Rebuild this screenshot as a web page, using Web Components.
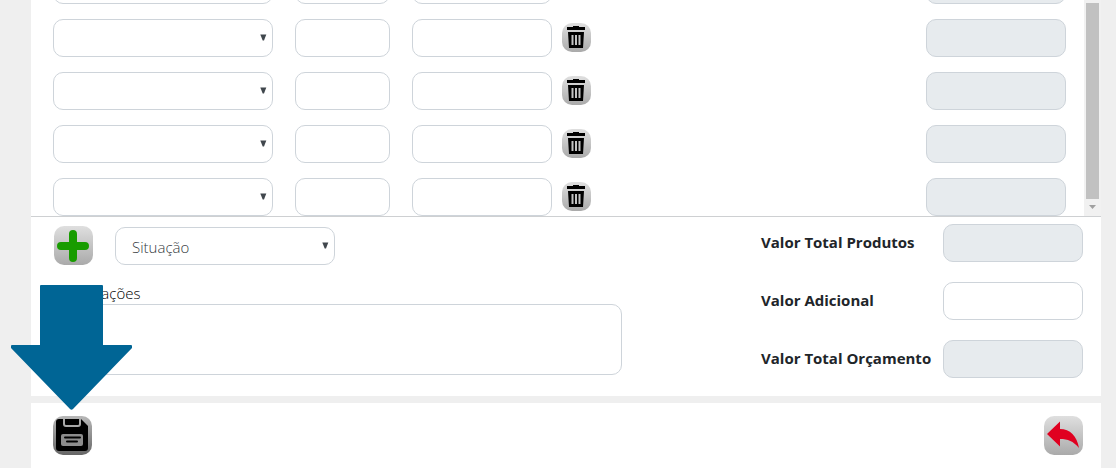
<!DOCTYPE html>
<html lang="pt-BR">
<head>
<meta charset="utf-8">
<title>Orçamento</title>
<style>
  body { margin: 0; background: #efefef; color: #212529; font: 300 15px/20px "Open Sans", "Noto Sans", sans-serif; }
</style>
</head>
<body>
<budget-page></budget-page>
<script>
const define = (name, html, setup) => customElements.define(name, class extends HTMLElement {
  connectedCallback() {
    if (this.shadowRoot) return;
    const t = document.createElement('template');
    t.innerHTML = html;
    this.attachShadow({ mode: 'open' }).append(t.content.cloneNode(true));
    if (setup) setup(this, this.shadowRoot);
  }
});

const control = `
  * { box-sizing: border-box; }
  input, select, textarea {
    display: block; width: 100%; height: 38px; margin: 0; padding: 0 16px;
    border: 1px solid #ced4da; border-radius: 10px; background: #fff;
    color: #343a40; font: inherit; outline: 0; appearance: none;
  }
  input:disabled { background: #e7ebee; }`;

define('text-field', `
  <style>${control}
    :host { display: block; flex: none; width: 140px; }
    label { display: flex; align-items: center; }
    label span:not(:empty) { width: 182px; flex: none; padding-bottom: 2px; font-weight: 700; }
    :host([label]) { width: auto; }
    :host([label]) input { width: 140px; }
    :host([small]) { width: 95px; }
  </style>
  <label><span></span><input type="text"></label>`, (host, root) => {
  const input = root.querySelector('input');
  root.querySelector('span').textContent = host.getAttribute('label') || '';
  if (!host.hasAttribute('label')) input.setAttribute('aria-label', host.getAttribute('name'));
  input.disabled = host.hasAttribute('disabled');
});

define('select-field', `
  <style>${control}
    :host { display: grid; flex: none; width: 220px; align-items: center; }
    select, svg { grid-area: 1 / 1; }
    select { padding-top: 2px; }
    svg { justify-self: end; width: 7px; height: 7px; margin: 0 6px 1px 0; pointer-events: none; fill: #40474d; }
  </style>
  <select><option></option></select>
  <svg viewBox="0 0 7 7"><path d="M.3 .5h6L4 6.500H2.700z"/></svg>`, (host, root) => {
  root.querySelector('option').textContent = host.getAttribute('value') || '';
  root.querySelector('select').setAttribute('aria-label', host.getAttribute('name'));
});

define('text-area-field', `
  <style>${control}
    :host { display: block; color: #000; }
    label { display: block; padding-bottom: 1px; }
    textarea { height: 71px; padding: 8px 16px; resize: none; }
  </style>
  <label for="t"><slot></slot></label><textarea id="t"></textarea>`);

const icons = {
  trash: `<svg viewBox="0 0 29 29"><path d="M5 4h6V3h6v1h6v3H5zM6 9h16l-1 16H7z"/><path fill="none" stroke="#c4c4c4" stroke-width="2" d="M10.500 12v10M14 12v10M17.500 12v10"/></svg>`,
  plus: `<svg viewBox="0 0 39 39"><path fill="none" stroke="#189c00" stroke-width="8" stroke-linecap="round" d="M7 20h24M19 8v24"/></svg>`,
  save: `<svg viewBox="0 0 39 39"><path d="M6 3h22l7 7v22q0 3-3 3H6q-3 0-3-3V6q0-3 3-3z"/><path fill="none" stroke="#a8a8a8" stroke-width="2" d="M11 3v5q0 2 2 2h12q2 0 2-2V3"/><rect x="8" y="18" width="22" height="12" rx="2" fill="#8c8c8c"/><path stroke="#000" stroke-width="2" stroke-linecap="round" d="M12 21.500h15M14 25.500h10"/></svg>`,
  back: `<svg viewBox="0 0 39 39"><path fill="#e00020" d="M3 18 16 5.500v7.500C26 13 33 20 35 32 29 25 24 23 16 23v7.500z"/></svg>`
};

define('icon-button', `
  <style>
    :host { display: block; flex: none; width: 39px; height: 39px; }
    :host([icon=trash]) { width: 29px; height: 29px; margin-bottom: 2px; }
    button { display: block; width: 100%; height: 100%; padding: 0; border: 0; border-radius: 10px; background: linear-gradient(#dfdfdf, #aaa); }
    :host([icon=save]) button { background: linear-gradient(#b8b8b8, #666); }
    svg { display: block; width: 100%; height: 100%; }
  </style>
  <button type="button"></button>`, (host, root) => {
  const b = root.querySelector('button');
  b.innerHTML = icons[host.getAttribute('icon')];
  b.setAttribute('aria-label', host.getAttribute('name'));
});

define('item-row', `
  <style>
    :host { display: flex; flex: none; align-items: center; gap: 22px; }
    .value { display: flex; align-items: center; gap: 10px; }
    .total { margin-left: auto; }
  </style>
  <select-field name="Produto"></select-field>
  <text-field small name="Quantidade"></text-field>
  <div class="value"><text-field name="Valor"></text-field><icon-button icon="trash" name="Excluir"></icon-button></div>
  <text-field class="total" disabled name="Total"></text-field>`);

define('scroll-bar', `
  <style>
    :host { display: flex; flex-direction: column; align-items: center; gap: 6px; box-sizing: border-box; width: 17px; padding: 3px 0 7px; background: #f1f1f1; }
    div { flex: 1; width: 13px; background: #c1c1c1; }
    svg { width: 7px; height: 4px; fill: #a0a0a0; }
  </style>
  <div></div><svg viewBox="0 0 7 4"><path d="M0 0h7L3.500 4z"/></svg>`);

define('item-list', `
  <style>
    :host { display: flex; height: 216px; border-bottom: 1px solid #ced0d2; }
    .rows { flex: 1; display: flex; flex-direction: column; justify-content: flex-end; gap: 15px; padding: 0 18px 0 22px; overflow: hidden; }
  </style>
  <div class="rows"><slot></slot></div><scroll-bar></scroll-bar>`);

define('callout-arrow', `
  <style>
    :host { position: absolute; left: 11px; top: 285px; pointer-events: none; }
    svg { display: block; fill: #006595; }
  </style>
  <svg width="121" height="125" viewBox="0 0 121 125"><path d="M30 0h61q1 0 1 1v59h28q1 0 1 1v2L62 124q-1.500 1.500-3 0L0 63v-2q0-1 1-1h28V1q0-1 1-1z"/></svg>`);

define('budget-page', `
  <style>
    :host { display: flex; flex-direction: column; gap: 7px; min-height: 100vh; box-sizing: border-box; padding: 0 15px 0 31px; position: relative; }
    section, footer { background: #fff; }
    .details { display: flex; justify-content: space-between; padding: 7px 18px 17px 22px; }
    .left { width: 569px; padding: 2px 0 4px; }
    .status { display: flex; gap: 22px; padding: 0 0 18px 1px; }
    .totals { display: flex; flex-direction: column; gap: 20px; }
    footer { flex: 1; display: flex; justify-content: space-between; padding: 13px 18px 13px 22px; }
  </style>
  <section>
    <item-list>${'<item-row></item-row>'.repeat(5)}</item-list>
    <div class="details">
      <div class="left">
        <div class="status"><icon-button icon="plus" name="Adicionar"></icon-button><select-field name="Situação" value="Situação"></select-field></div>
        <text-area-field>Observações</text-area-field>
      </div>
      <div class="totals">
        <text-field label="Valor Total Produtos" disabled></text-field>
        <text-field label="Valor Adicional"></text-field>
        <text-field label="Valor Total Orçamento" disabled></text-field>
      </div>
    </div>
  </section>
  <footer><icon-button icon="save" name="Salvar"></icon-button><icon-button icon="back" name="Voltar"></icon-button></footer>
  <callout-arrow></callout-arrow>`);
</script>
</body>
</html>
